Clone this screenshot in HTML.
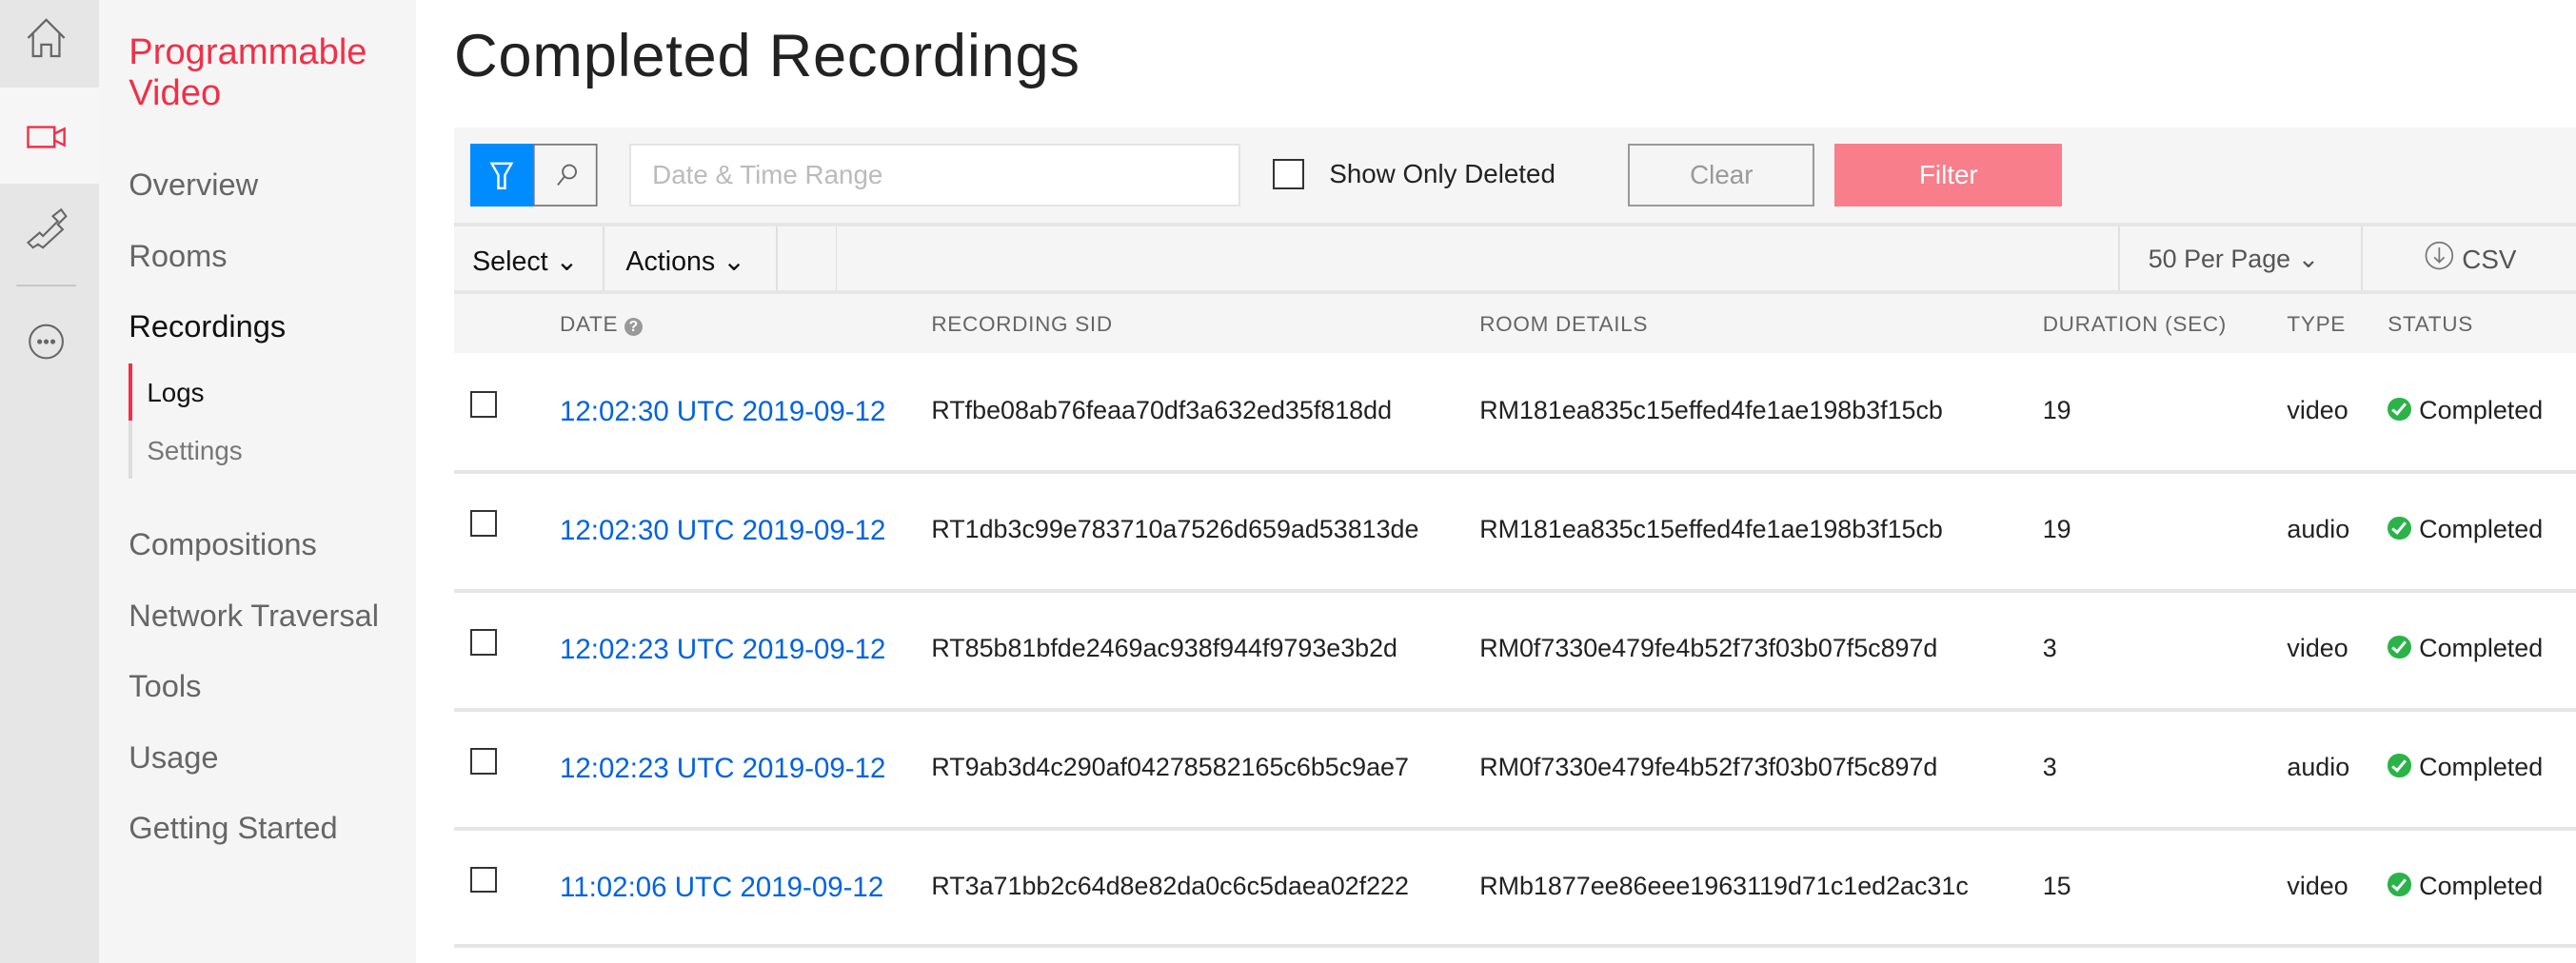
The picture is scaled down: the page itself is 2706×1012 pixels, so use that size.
<!DOCTYPE html>
<html><head><meta charset="utf-8"><style>
html,body{margin:0;padding:0;background:#fff;width:2706px;height:1012px;overflow:hidden}
#w{zoom:1.7346;width:1560px;height:584px;position:relative;font-family:"Liberation Sans",sans-serif;color:#222}
.a{position:absolute;white-space:nowrap}
.rail{left:0;top:0;width:60px;height:584px;background:#e6e6e6}
.nav{left:60px;top:0;width:192px;height:584px;background:#f5f5f5}
.ni{left:78px;font-size:18.8px;color:#666;line-height:20px}
.hd{font-size:13px;color:#666;letter-spacing:.4px;top:189px}
.row{font-size:15.5px;color:#222}
.dt{font-size:17px;color:#0263e0}
.cb{width:16px;height:16px;border:1.5px solid #333;background:#fff;box-sizing:border-box}
.sep{left:275px;width:1285px;height:2px;background:#e6e6e6}
.vd{width:1px;background:#e0e0e0;top:137px;height:40px}
.ok{display:inline-block;width:14px;height:14px;border-radius:50%;background:#2bb34a;vertical-align:-1px;margin-right:5px;position:relative}
.ok:after{content:"";position:absolute;left:4.5px;top:2px;width:3px;height:7px;border-right:2px solid #fff;border-bottom:2px solid #fff;transform:rotate(40deg)}
</style></head><body><div id="w">
<div class="a rail"></div>
<div class="a" style="left:0;top:53px;width:60px;height:58px;background:#f6f6f6"></div>
<svg class="a" style="left:0;top:0" width="60" height="240" viewBox="0 0 60 240">
<path d="M17 23 L28 12 L39 23 M20 20 V34 H25 V27 H31 V34 H36 V20" fill="none" stroke="#666" stroke-width="1.3"/>
<path d="M17 77 H33 V89 H17 Z M33 81 L39 78 V88 L33 85" fill="none" stroke="#f22f46" stroke-width="1.4"/>
<path d="M32 131 L37 127 L40 131 L35 136 L38 139 L26 150 L23 148 L20 150 L17 147 L24 141 L26 143 L35 134 Z" fill="none" stroke="#666" stroke-width="1.2"/>
<line x1="10" y1="173" x2="46" y2="173" stroke="#c8c8c8" stroke-width="1.2"/>
<circle cx="28" cy="207" r="10" fill="none" stroke="#666" stroke-width="1.2"/>
<circle cx="24" cy="207" r="1.5" fill="#666"/><circle cx="28" cy="207" r="1.5" fill="#666"/><circle cx="32" cy="207" r="1.5" fill="#666"/>
</svg>
<div class="a nav"></div>
<div class="a" style="left:78px;top:19px;font-size:22px;color:#f22f46;line-height:25px">Programmable<br>Video</div>
<div class="a ni" style="top:102px">Overview</div>
<div class="a ni" style="top:145px">Rooms</div>
<div class="a ni" style="top:188px;color:#111">Recordings</div>
<div class="a" style="left:78px;top:220px;width:2px;height:35px;background:#f22f46"></div>
<div class="a" style="left:78px;top:255px;width:2px;height:35px;background:#ddd"></div>
<div class="a" style="left:89px;top:229px;font-size:16px;color:#111">Logs</div>
<div class="a" style="left:89px;top:264px;font-size:16px;color:#777">Settings</div>
<div class="a ni" style="top:320px">Compositions</div>
<div class="a ni" style="top:363px">Network Traversal</div>
<div class="a ni" style="top:406px">Tools</div>
<div class="a ni" style="top:449px">Usage</div>
<div class="a ni" style="top:492px">Getting Started</div>

<div class="a" style="left:275px;top:13px;font-size:36.5px;color:#222;letter-spacing:.4px">Completed Recordings</div>

<div class="a" style="left:275px;top:77px;width:1285px;height:137px;background:#f5f5f5"></div>
<div class="a" style="left:285px;top:87px;width:38px;height:38px;background:#008cff"></div>
<svg class="a" style="left:285px;top:87px" width="78" height="38"><path d="M13 12 H25 L21 19 V27 H17 V19 Z" fill="none" stroke="#fff" stroke-width="1.4"/><rect x="38.5" y=".5" width="38" height="37" fill="none" stroke="#777"/><circle cx="60" cy="17" r="4" fill="none" stroke="#666" stroke-width="1.1"/><line x1="57" y1="20" x2="53" y2="25" stroke="#666" stroke-width="1.1"/></svg>
<div class="a" style="left:381px;top:87px;width:370px;height:38px;background:#fff;border:1.5px solid #e4e4e4;box-sizing:border-box"></div>
<div class="a" style="left:395px;top:97px;font-size:16px;color:#bbb">Date &amp; Time Range</div>
<div class="a cb" style="left:771px;top:96px;width:19px;height:19px"></div>
<div class="a" style="left:805px;top:96px;font-size:16px;color:#222">Show Only Deleted</div>
<div class="a" style="left:986px;top:87px;width:113px;height:38px;border:1.5px solid #999;box-sizing:border-box;font-size:16px;color:#999;text-align:center;line-height:36px">Clear</div>
<div class="a" style="left:1111px;top:87px;width:138px;height:38px;background:#f77e8a;font-size:16px;color:#fff;text-align:center;line-height:38px">Filter</div>
<div class="a sep" style="top:135px"></div>
<div class="a" style="left:286px;top:148px;font-size:16.5px;color:#111">Select &#8964;</div>
<div class="a vd" style="left:365px"></div>
<div class="a" style="left:379px;top:148px;font-size:16.5px;color:#111">Actions &#8964;</div>
<div class="a vd" style="left:470px"></div>
<div class="a vd" style="left:506px"></div>
<div class="a vd" style="left:1283px"></div>
<div class="a" style="left:1301px;top:148px;font-size:15.5px;color:#555">50 Per Page &#8964;</div>
<div class="a vd" style="left:1430px"></div>
<svg class="a" style="left:1467px;top:146px" width="20" height="20"><circle cx="10" cy="9" r="8" fill="none" stroke="#777" stroke-width="1"/><path d="M10 4 V13 M7 10 L10 13 L13 10" fill="none" stroke="#777" stroke-width="1"/></svg>
<div class="a" style="left:1491px;top:148px;font-size:16px;color:#555">CSV</div>
<div class="a sep" style="top:176px"></div>
<div class="a hd" style="left:339px">DATE <span style="display:inline-block;width:11px;height:11px;border-radius:50%;background:#999;color:#fff;font-size:9px;text-align:center;line-height:11px;font-weight:bold">?</span></div>
<div class="a hd" style="left:564px">RECORDING SID</div>
<div class="a hd" style="left:896px">ROOM DETAILS</div>
<div class="a hd" style="left:1237px">DURATION (SEC)</div>
<div class="a hd" style="left:1385px">TYPE</div>
<div class="a hd" style="left:1446px">STATUS</div>

<div class="a sep" style="top:285px"></div>
<div class="a sep" style="top:357px"></div>
<div class="a sep" style="top:429px"></div>
<div class="a sep" style="top:501px"></div>
<div class="a sep" style="top:572px"></div>

<div class="a cb" style="left:285px;top:237px"></div>
<div class="a dt" style="left:339px;top:240px">12:02:30 UTC 2019-09-12</div>
<div class="a row" style="left:564px;top:240px">RTfbe08ab76feaa70df3a632ed35f818dd</div>
<div class="a row" style="left:896px;top:240px">RM181ea835c15effed4fe1ae198b3f15cb</div>
<div class="a row" style="left:1237px;top:240px">19</div>
<div class="a row" style="left:1385px;top:240px">video</div>
<div class="a row" style="left:1446px;top:240px"><span class="ok"></span>Completed</div>

<div class="a cb" style="left:285px;top:309px"></div>
<div class="a dt" style="left:339px;top:312px">12:02:30 UTC 2019-09-12</div>
<div class="a row" style="left:564px;top:312px">RT1db3c99e783710a7526d659ad53813de</div>
<div class="a row" style="left:896px;top:312px">RM181ea835c15effed4fe1ae198b3f15cb</div>
<div class="a row" style="left:1237px;top:312px">19</div>
<div class="a row" style="left:1385px;top:312px">audio</div>
<div class="a row" style="left:1446px;top:312px"><span class="ok"></span>Completed</div>

<div class="a cb" style="left:285px;top:381px"></div>
<div class="a dt" style="left:339px;top:384px">12:02:23 UTC 2019-09-12</div>
<div class="a row" style="left:564px;top:384px">RT85b81bfde2469ac938f944f9793e3b2d</div>
<div class="a row" style="left:896px;top:384px">RM0f7330e479fe4b52f73f03b07f5c897d</div>
<div class="a row" style="left:1237px;top:384px">3</div>
<div class="a row" style="left:1385px;top:384px">video</div>
<div class="a row" style="left:1446px;top:384px"><span class="ok"></span>Completed</div>

<div class="a cb" style="left:285px;top:453px"></div>
<div class="a dt" style="left:339px;top:456px">12:02:23 UTC 2019-09-12</div>
<div class="a row" style="left:564px;top:456px">RT9ab3d4c290af04278582165c6b5c9ae7</div>
<div class="a row" style="left:896px;top:456px">RM0f7330e479fe4b52f73f03b07f5c897d</div>
<div class="a row" style="left:1237px;top:456px">3</div>
<div class="a row" style="left:1385px;top:456px">audio</div>
<div class="a row" style="left:1446px;top:456px"><span class="ok"></span>Completed</div>

<div class="a cb" style="left:285px;top:525px"></div>
<div class="a dt" style="left:339px;top:528px">11:02:06 UTC 2019-09-12</div>
<div class="a row" style="left:564px;top:528px">RT3a71bb2c64d8e82da0c6c5daea02f222</div>
<div class="a row" style="left:896px;top:528px">RMb1877ee86eee1963119d71c1ed2ac31c</div>
<div class="a row" style="left:1237px;top:528px">15</div>
<div class="a row" style="left:1385px;top:528px">video</div>
<div class="a row" style="left:1446px;top:528px"><span class="ok"></span>Completed</div>
</div></body></html>
